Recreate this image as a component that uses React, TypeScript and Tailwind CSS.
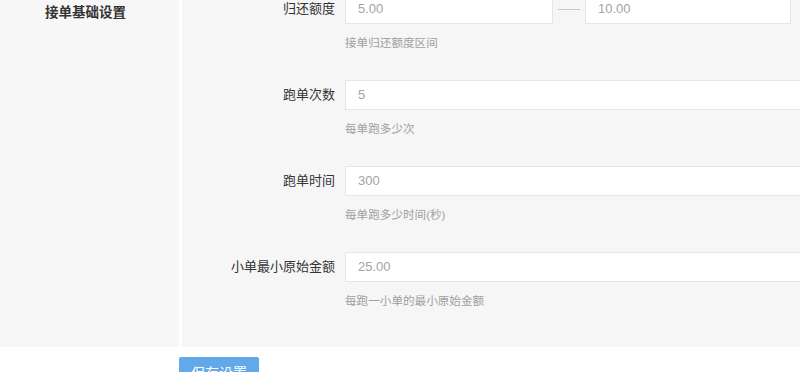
const font = { fontFamily: '"Liberation Sans", "Noto Sans CJK SC", sans-serif' };

type Row = { label: string; value: string; help: string };

const rows: Row[] = [
  { label: '跑单次数', value: '5', help: '每单跑多少次' },
  { label: '跑单时间', value: '300', help: '每单跑多少时间(秒)' },
  { label: '小单最小原始金额', value: '25.00', help: '每跑一小单的最小原始金额' },
];

function Field({ value, className }: { value: string; className: string }) {
  return (
    <div
      className={`flex h-[30px] items-center border border-[#e6e6e6] bg-white pl-[12px] text-[13px] text-[#a3a3a3] ${className}`}
    >
      {value}
    </div>
  );
}

export default function App() {
  return (
    <div className="h-[372px] w-[800px] overflow-hidden bg-white" style={font}>
      <div className="flex h-[347px] bg-[#f7f7f7]">
        {/* section title column */}
        <div className="w-[182px] shrink-0 border-r-[3px] border-white pl-[45px] pt-[4px]">
          <div className="text-[13.5px] font-semibold leading-[18px] text-[#333]">接单基础设置</div>
        </div>

        <div className="-mt-[6px] flex-1 bg-[#f6f6f6]">
          <div className="h-[86px]">
            <div className="flex items-center">
              <div className="w-[153px] shrink-0 text-right text-[13px] text-[#333]">归还额度</div>
              <Field value="5.00" className="ml-[10px] w-[208px]" />
              <div className="flex w-[32px] justify-center">
                <div className="h-px w-[22px] bg-[#c8c8c8]" />
              </div>
              <Field value="10.00" className="w-[206px]" />
            </div>
            <div className="ml-[163px] mt-[10px] text-[11.6px] leading-[18px] text-[#a0a0a0]">接单归还额度区间</div>
          </div>

          {rows.map((r) => (
            <div key={r.label} className="h-[86px]">
              <div className="flex items-center">
                <div className="w-[153px] shrink-0 text-right text-[13px] text-[#333]">{r.label}</div>
                <Field value={r.value} className="ml-[10px] w-[500px] shrink-0" />
              </div>
              <div className="ml-[163px] mt-[10px] text-[11.6px] leading-[18px] text-[#a0a0a0]">{r.help}</div>
            </div>
          ))}
        </div>
      </div>

      <button className="ml-[179px] mt-[10px] h-[32px] w-[80px] rounded-[2px] bg-[#62a9e9] text-[14px] text-white">
        保存设置
      </button>
    </div>
  );
}
